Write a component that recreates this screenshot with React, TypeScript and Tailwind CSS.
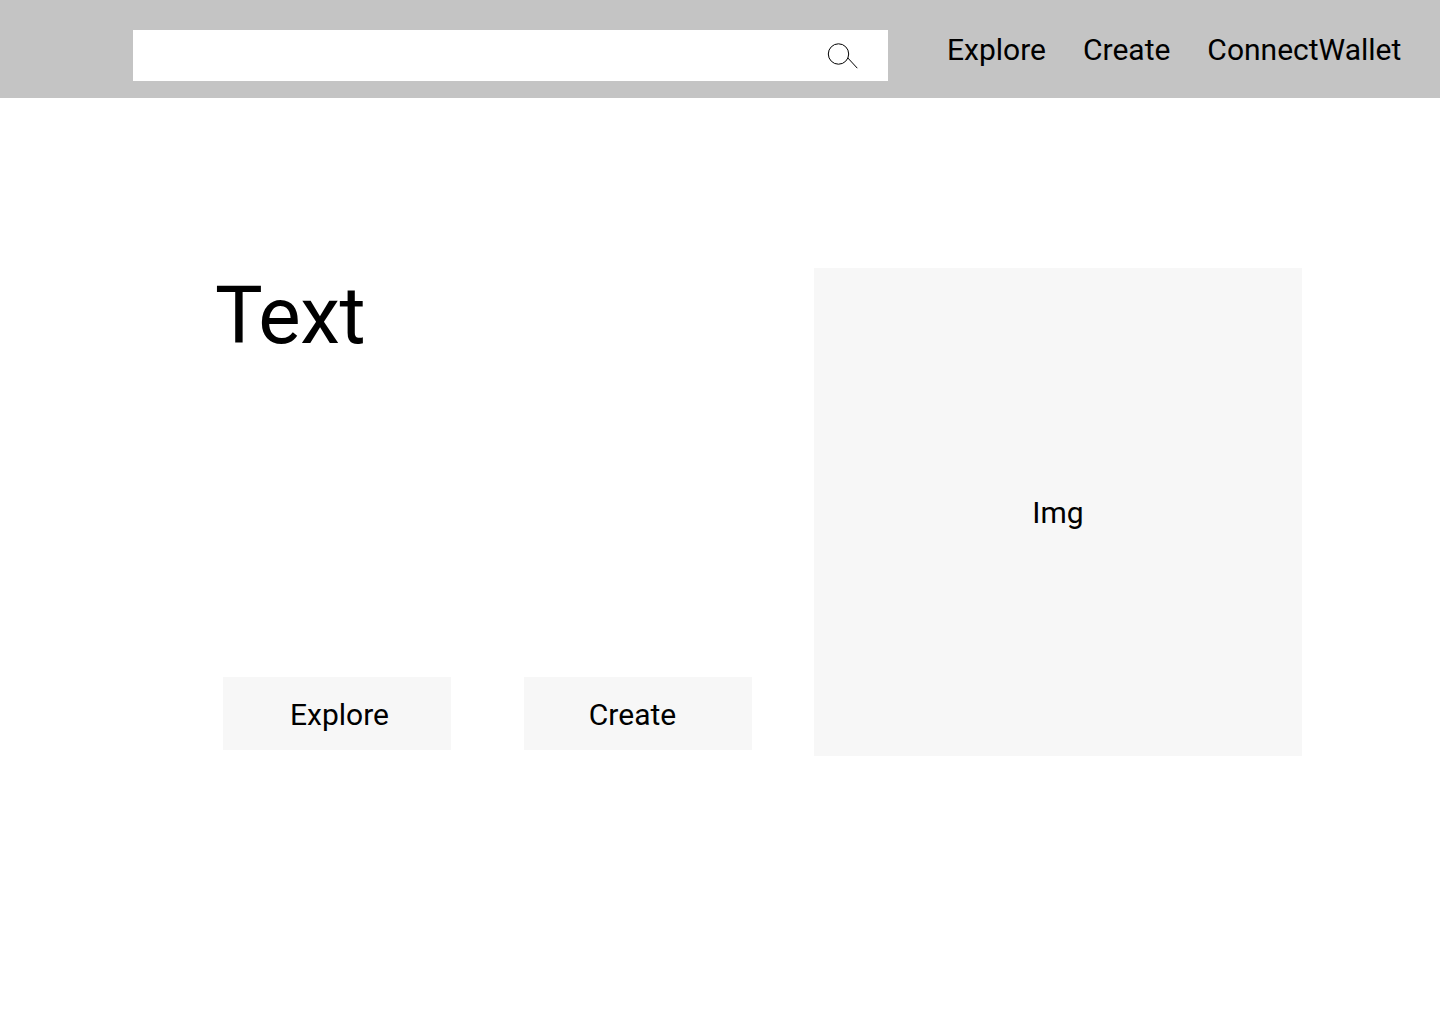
const navItems = ["Explore", "Create", "ConnectWallet"];

const SearchIcon = () => (
  <svg width="32" height="28" viewBox="0 0 32 28" fill="none" stroke="#000" strokeWidth="1">
    <circle cx="11.5" cy="12" r="10.2" />
    <path d="M20.7 15.8 L30.3 26.2" />
  </svg>
);

export default function App() {
  return (
    <div className="min-h-[1024px] bg-white text-black font-['Roboto',sans-serif]">
      <header className="flex h-[98px] items-center bg-[#c4c4c4] pl-[133px]">
        <div className="mt-[13px] flex h-[51px] w-[755px] items-center justify-end bg-white pr-[29px]">
          <SearchIcon />
        </div>
        <nav className="ml-[59px] flex gap-[37px] text-[30px]">
          {navItems.map((item) => (
            <a key={item}>{item}</a>
          ))}
        </nav>
      </header>

      <main className="flex pl-[215px] pt-[170px]">
        <div className="w-[537px]">
          <h1 className="text-[80px] leading-[96px] tracking-[-0.5px]">Text</h1>
          <div className="mt-[313px] ml-[8px] flex gap-[73px] text-[30px]">
            <button className="h-[73px] w-[228px] bg-[#f7f7f7] pl-[5px] pt-[2px]">Explore</button>
            <button className="h-[73px] w-[228px] bg-[#f7f7f7] pr-[11px] pt-[2px]">Create</button>
          </div>
        </div>
        <div className="ml-[62px] flex h-[488px] w-[488px] items-center justify-center bg-[#f7f7f7] text-[30px]">Img</div>
      </main>
    </div>
  );
}
